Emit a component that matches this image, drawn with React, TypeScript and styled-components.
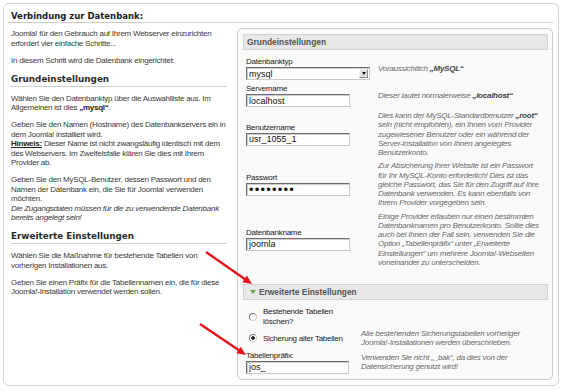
import styled, { createGlobalStyle } from 'styled-components';

const GlobalStyle = createGlobalStyle`
  html, body {
    margin: 0;
    padding: 0;
    background: #fff;
  }
  body {
    font-family: 'Liberation Sans', Arial, sans-serif;
    color: #333;
  }
  * {
    box-sizing: border-box;
  }
`;

const Page = styled.div`
  position: relative;
  width: 563px;
  height: 390px;
  padding: 3px 4px 4px 3px;
`;

const Frame = styled.div`
  height: 100%;
  border: 1px solid #d2d2d2;
  border-radius: 6px;
  padding: 6px 5px 5px 4px;
  display: flex;
  flex-direction: column;
`;

const Title = styled.h1`
  margin: 0;
  padding: 0 0 0 3px;
  font-family: 'DejaVu Sans', Verdana, sans-serif;
  font-size: 8.5px;
  font-weight: bold;
  line-height: 12px;
  color: #1a1a1a;
  border-bottom: 1px solid #cfcfcf;
`;

const Body = styled.div`
  flex: 1;
  display: grid;
  grid-template-columns: 221px 316px;
  column-gap: 8px;
  margin-top: 5px;
`;

const Intro = styled.div`
  padding: 1px 2px 0 3px;
`;

const Para = styled.p`
  margin: 0 0 7.5px;
  font-size: 8px;
  letter-spacing: -0.25px;
  line-height: 9.5px;
  white-space: nowrap;
  color: #3a3a3a;

  b {
    color: #222;
  }
`;

const Heading = styled.h2`
  margin: 2px 0 7px;
  padding-bottom: 1px;
  font-family: 'DejaVu Sans', Verdana, sans-serif;
  font-size: 8.8px;
  font-weight: bold;
  line-height: 12px;
  color: #2a2a2a;
  border-bottom: 1px solid #d0d0d0;
`;

const Panel = styled.div`
  border: 1px solid #cdcdcd;
  border-radius: 5px;
  background: #fafafa;
  padding: 5px 4px 0 5px;
`;

const SectionBar = styled.div<{ $top?: number }>`
  height: 16px;
  margin-top: ${(p) => p.$top ?? 0}px;
  display: flex;
  align-items: center;
  gap: 3px;
  padding-left: 3px;
  background: #e7e7e7;
  border: 1px solid #d3d3d3;
  font-size: 8.4px;
  font-weight: bold;
  color: #555;
`;

const Toggle = styled.span`
  width: 0;
  height: 0;
  margin-left: 3px;
  border-left: 3px solid transparent;
  border-right: 3px solid transparent;
  border-top: 4px solid #6aa84f;
`;

const FormGrid = styled.div<{ $label: number; $top: number; $gap: number }>`
  display: grid;
  grid-template-columns: ${(p) => p.$label}px 1fr;
  column-gap: 8px;
  row-gap: ${(p) => p.$gap}px;
  align-items: center;
  margin: ${(p) => p.$top}px 0 0 3px;
`;

const Field = styled.div`
  display: flex;
  flex-direction: column;
  gap: 0.5px;
`;

const Label = styled.label`
  font-size: 8px;
  letter-spacing: -0.25px;
  line-height: 9.5px;
  color: #222;
`;

const Input = styled.input<{ $w: number; $secret?: boolean }>`
  width: ${(p) => p.$w}px;
  height: 13px;
  margin: 0;
  padding: 0 2px;
  font-family: 'Liberation Sans', Arial, sans-serif;
  font-size: ${(p) => (p.$secret ? 13 : 9)}px;
  letter-spacing: ${(p) => (p.$secret ? 1.2 : 0)}px;
  color: #111;
  background: #fff;
  border-style: solid;
  border-width: 1px;
  border-color: #6c6c6c #c9c9c9 #c9c9c9 #6c6c6c;
  box-shadow: inset 1px 1px 0 #cfcfcf;
  outline: none;
`;

const Select = styled.div`
  width: 124px;
  height: 13px;
  display: flex;
  align-items: center;
  justify-content: space-between;
  padding: 0 1px 0 2px;
  font-size: 9px;
  color: #111;
  background: #fff;
  border-style: solid;
  border-width: 1px;
  border-color: #6c6c6c #c9c9c9 #c9c9c9 #6c6c6c;
  box-shadow: inset 1px 1px 0 #cfcfcf;
`;

const SelectButton = styled.span`
  width: 9px;
  height: 9px;
  display: flex;
  align-items: center;
  justify-content: center;
  background: #e2e2e2;
  border: 1px solid;
  border-color: #f4f4f4 #8a8a8a #8a8a8a #f4f4f4;

  &::before {
    content: '';
    border-left: 2.5px solid transparent;
    border-right: 2.5px solid transparent;
    border-top: 3px solid #111;
  }
`;

const Hint = styled.div`
  font-size: 8px;
  font-style: italic;
  letter-spacing: -0.25px;
  line-height: 9.25px;
  white-space: nowrap;
  color: #6a6a6a;

  b {
    color: #444;
  }
`;

const Choice = styled.label`
  display: flex;
  align-items: center;
  gap: 6px;
  padding-left: 3px;
  font-size: 8px;
  letter-spacing: -0.25px;
  line-height: 9.5px;
  color: #222;
`;

const Radio = styled.span<{ $checked?: boolean }>`
  flex: none;
  width: 8px;
  height: 8px;
  border-radius: 50%;
  border: 1px solid;
  border-color: #7a7a7a #d0d0d0 #d0d0d0 #7a7a7a;
  background: ${(p) =>
    p.$checked ? 'radial-gradient(circle, #222 0 1.5px, #fff 2px)' : '#fff'};
`;

const Marks = styled.svg`
  position: absolute;
  top: 0;
  left: 0;
  pointer-events: none;
`;

const Arrow = ({ x1, y1, x2, y2 }: { x1: number; y1: number; x2: number; y2: number }) => {
  const len = Math.hypot(x2 - x1, y2 - y1);
  const dx = (x2 - x1) / len;
  const dy = (y2 - y1) / len;
  const bx = x2 - dx * 9;
  const by = y2 - dy * 9;
  const head = `${x2},${y2} ${bx - dy * 4},${by + dx * 4} ${bx + dy * 4},${by - dx * 4}`;
  return (
    <g>
      <line x1={x1} y1={y1} x2={bx + dx} y2={by + dy} stroke='#e5141b' strokeWidth={2.4} />
      <polygon points={head} fill='#e5141b' />
    </g>
  );
};

const App = () => {
  return (
    <Page>
      <GlobalStyle />
      <Frame>
        <Title>Verbindung zur Datenbank:</Title>
        <Body>
          <Intro>
            <Para>
              Joomla! für den Gebrauch auf Ihrem Webserver einzurichten
              <br />
              erfordert vier einfache Schritte...
            </Para>
            <Para>In diesem Schritt wird die Datenbank eingerichtet:</Para>
            <Heading>Grundeinstellungen</Heading>
            <Para>
              Wählen Sie den Datenbanktyp über die Auswahlliste aus. Im
              <br />
              Allgemeinen ist dies <b>„mysql“</b>.
            </Para>
            <Para>
              Geben Sie den Namen (Hostname) des Datenbankservers ein in
              <br />
              dem Joomla! installiert wird.
              <br />
              <b>
                <u>Hinweis:</u>
              </b>{' '}
              Dieser Name ist nicht zwangsläufig identisch mit dem
              <br />
              des Webservers. Im Zweifelsfalle klären Sie dies mit Ihrem
              <br />
              Provider ab.
            </Para>
            <Para>
              Geben Sie den MySQL-Benutzer, dessen Passwort und den
              <br />
              Namen der Datenbank ein, die Sie für Joomla! verwenden
              <br />
              möchten.
              <br />
              <i>
                Die Zugangsdaten müssen für die zu verwendende Datenbank
                <br />
                bereits angelegt sein!
              </i>
            </Para>
            <Heading>Erweiterte Einstellungen</Heading>
            <Para>
              Wählen Sie die Maßnahme für bestehende Tabellen von
              <br />
              vorherigen Installationen aus.
            </Para>
            <Para>
              Geben Sie einen Präfix für die Tabellennamen ein, die für diese
              <br />
              Joomla!-Installation verwendet werden sollen.
            </Para>
          </Intro>

          <Panel>
            <SectionBar>Grundeinstellungen</SectionBar>
            <FormGrid $label={124} $top={7} $gap={4}>
              <Field>
                <Label>Datenbanktyp</Label>
                <Select>
                  mysql
                  <SelectButton />
                </Select>
              </Field>
              <Hint>
                Voraussichtlich <b>„MySQL“</b>
              </Hint>

              <Field>
                <Label>Servername</Label>
                <Input $w={104} readOnly defaultValue='localhost' />
              </Field>
              <Hint>
                Dieser lautet normalerweise <b>„localhost“</b>
              </Hint>

              <Field>
                <Label>Benutzername</Label>
                <Input $w={104} readOnly defaultValue='usr_1055_1' />
              </Field>
              <Hint>
                Dies kann der MySQL-Standardbenutzer <b>„root“</b>
                <br />
                sein (nicht empfohlen), ein Ihnen vom Provider
                <br />
                zugewiesener Benutzer oder ein während der
                <br />
                Server-Installation von Ihnen angelegtes
                <br />
                Benutzerkonto.
              </Hint>

              <Field>
                <Label>Passwort</Label>
                <Input $w={104} $secret type='password' readOnly defaultValue='joomla15' />
              </Field>
              <Hint>
                Zur Absicherung Ihrer Website ist ein Passwort
                <br />
                für Ihr MySQL-Konto erforderlich! Dies ist das
                <br />
                gleiche Passwort, das Sie für den Zugriff auf Ihre
                <br />
                Datenbank verwenden. Es kann ebenfalls von
                <br />
                Ihrem Provider vorgegeben sein.
              </Hint>

              <Field>
                <Label>Datenbankname</Label>
                <Input $w={104} readOnly defaultValue='joomla' />
              </Field>
              <Hint>
                Einige Provider erlauben nur einen bestimmten
                <br />
                Datenbanknamen pro Benutzerkonto. Sollte dies
                <br />
                auch bei Ihnen der Fall sein, verwenden Sie die
                <br />
                Option „Tabellenpräfix“ unter „Erweiterte
                <br />
                Einstellungen“ um mehrere Joomla!-Webseiten
                <br />
                voneinander zu unterscheiden.
              </Hint>
            </FormGrid>

            <SectionBar $top={17}>
              <Toggle />
              Erweiterte Einstellungen
            </SectionBar>
            <FormGrid $label={107} $top={7} $gap={3}>
              <Choice>
                <Radio />
                <span>
                  Bestehende Tabellen
                  <br />
                  löschen?
                </span>
              </Choice>
              <Hint />

              <Choice>
                <Radio $checked />
                <span>Sicherung alter Tabellen</span>
              </Choice>
              <Hint>
                Alle bestehenden Sicherungstabellen vorheriger
                <br />
                Joomla!-Installationen werden überschrieben.
              </Hint>

              <Field>
                <Label>Tabellenpräfix:</Label>
                <Input $w={103} readOnly defaultValue='jos_' />
              </Field>
              <Hint>
                Verwenden Sie nicht „_bak“, da dies von der
                <br />
                Datensicherung genutzt wird!
              </Hint>
            </FormGrid>
          </Panel>
        </Body>
      </Frame>

      <Marks width={563} height={390}>
        <Arrow x1={206} y1={252} x2={252} y2={284} />
        <Arrow x1={200} y1={324} x2={246} y2={355} />
      </Marks>
    </Page>
  );
};

export default App;
